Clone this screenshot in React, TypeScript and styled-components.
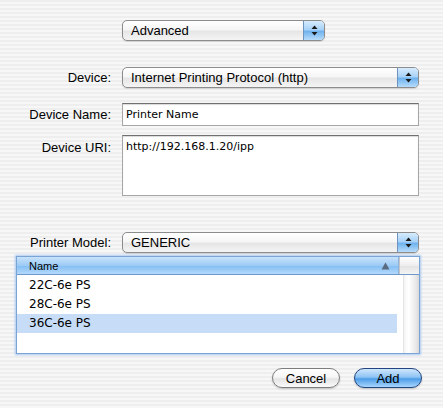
import React from "react";
import styled, { createGlobalStyle } from "styled-components";

const GlobalStyle = createGlobalStyle`
  html, body {
    margin: 0;
    padding: 0;
  }
  body {
    font-family: "Liberation Sans", Arial, sans-serif;
    color: #000;
    background: repeating-linear-gradient(
      to bottom,
      #eeeeee 0px,
      #eeeeee 2px,
      #f7f7f7 2px,
      #f7f7f7 4px
    );
  }
`;

const Sheet = styled.div`
  width: 443px;
  height: 408px;
  box-sizing: border-box;
  padding-top: 20px;
  display: flex;
  flex-direction: column;
`;

const TopRow = styled.div`
  padding-left: 122px;
  margin-bottom: 26px;
`;

const Form = styled.div`
  display: grid;
  grid-template-columns: 111px 296px;
  column-gap: 11px;
  align-items: center;
`;

const Label = styled.div<{ $top?: boolean; $gap?: number }>`
  font-size: 13px;
  text-align: right;
  align-self: ${(p) => (p.$top ? "start" : "center")};
  padding-top: ${(p) => (p.$top ? "5px" : "0")};
  margin-bottom: ${(p) => p.$gap ?? 0}px;
`;

const Cell = styled.div<{ $gap?: number }>`
  margin-bottom: ${(p) => p.$gap ?? 0}px;
`;

const PopupBox = styled.div<{ $width: number }>`
  position: relative;
  width: ${(p) => p.$width}px;
  height: 21px;
  box-sizing: border-box;
  border: 1px solid #8c8c8c;
  border-radius: 5px;
  background: linear-gradient(to bottom, #ffffff 0%, #f6f6f6 45%, #e6e6e6 55%, #f4f4f4 100%);
  box-shadow: 0 1px 1px rgba(0, 0, 0, 0.12);
  display: flex;
  align-items: center;
  overflow: hidden;
`;

const PopupText = styled.span`
  flex: 1;
  font-size: 13px;
  padding-left: 8px;
  white-space: nowrap;
`;

const PopupArrows = styled.div`
  width: 20px;
  align-self: stretch;
  border-left: 1px solid #6e93bf;
  background: linear-gradient(to bottom, #d6ebfd 0%, #a8d2f7 45%, #6fb3ee 55%, #b7dcfb 100%);
  display: flex;
  align-items: center;
  justify-content: center;
`;

const Popup = ({ text, width }: { text: string; width: number }) => (
  <PopupBox $width={width}>
    <PopupText>{text}</PopupText>
    <PopupArrows>
      <svg width="7" height="11" viewBox="0 0 7 11">
        <path d="M3.5 0.5 L6.5 4 L0.5 4 Z" fill="#1a1a1a" />
        <path d="M3.5 10.5 L6.5 7 L0.5 7 Z" fill="#1a1a1a" />
      </svg>
    </PopupArrows>
  </PopupBox>
);

const TextField = styled.div<{ $height: number; $size: number }>`
  width: 297px;
  height: ${(p) => p.$height}px;
  box-sizing: border-box;
  background: #fff;
  border: 1px solid #a6a6a6;
  border-top-color: #6f6f6f;
  box-shadow: inset 0 1px 1px rgba(0, 0, 0, 0.15);
  font-size: ${(p) => p.$size}px;
  padding: 4px 3px 0 3px;
  font-family: "DejaVu Sans", "Liberation Sans", sans-serif;
`;

const ListWrap = styled.div`
  margin: 3px 0 0 16px;
  width: 404px;
  height: 98px;
  box-sizing: border-box;
  border: 1px solid #7aa4d6;
  box-shadow: 0 0 2px 1px #a9c9ef;
  background: #fff;
  display: flex;
  flex-direction: column;
`;

const Header = styled.div`
  height: 17px;
  display: flex;
  border-bottom: 1px solid #6d98cc;
`;

const HeaderCol = styled.div`
  flex: 1;
  display: flex;
  align-items: center;
  justify-content: space-between;
  padding: 0 8px 0 12px;
  font-size: 11px;
  background: linear-gradient(to bottom, #c8e2fb 0%, #9ccbf5 50%, #82bdf3 51%, #b4dafc 100%);
  border-right: 1px solid #8fb3dc;
`;

const HeaderCorner = styled.div`
  width: 19px;
  background: linear-gradient(to bottom, #ffffff 0%, #eeeeee 50%, #e2e2e2 51%, #f4f4f4 100%);
  border-left: 1px solid #c4c4c4;
`;

const Body = styled.div`
  flex: 1;
  display: flex;
`;

const Rows = styled.div`
  width: 380px;
  padding-top: 1px;
`;

const Row = styled.div<{ $selected?: boolean }>`
  height: 19px;
  line-height: 19px;
  padding-left: 12px;
  font-size: 12px;
  font-family: "DejaVu Sans", "Liberation Sans", sans-serif;
  background: ${(p) => (p.$selected ? "#c7ddf7" : "transparent")};
`;

const Track = styled.div`
  margin-left: auto;
  width: 15px;
  background: linear-gradient(to right, #f4f4f4 0%, #ffffff 30%, #e8e8e8 80%, #d8d8d8 100%);
  border-left: 1px solid #e4e4e4;
`;

const Buttons = styled.div`
  display: flex;
  justify-content: flex-end;
  gap: 14px;
  padding-right: 21px;
  margin-top: 14px;
`;

const Button = styled.div<{ $primary?: boolean }>`
  width: 68px;
  height: 20px;
  box-sizing: border-box;
  border-radius: 10px;
  display: flex;
  align-items: center;
  justify-content: center;
  font-size: 13px;
  border: 1px solid ${(p) => (p.$primary ? "#22467f" : "#7d7d7d")};
  background: ${(p) =>
    p.$primary
      ? "linear-gradient(to bottom, #cfe6fc 0%, #8ec4f4 45%, #4d9de8 55%, #a8d6fd 100%)"
      : "linear-gradient(to bottom, #ffffff 0%, #f6f6f6 45%, #e4e4e4 55%, #fafafa 100%)"};
  box-shadow: 0 1px 2px rgba(0, 0, 0, 0.2);
`;

export default function App() {
  return (
    <>
      <GlobalStyle />
      <Sheet>
        <TopRow>
          <Popup text="Advanced" width={203} />
        </TopRow>
        <Form>
          <Label $gap={15}>Device:</Label>
          <Cell $gap={15}>
            <Popup text="Internet Printing Protocol (http)" width={297} />
          </Cell>
          <Label $gap={9}>Device Name:</Label>
          <Cell $gap={9}>
            <TextField $height={23} $size={11}>Printer Name</TextField>
          </Cell>
          <Label $top $gap={36}>Device URI:</Label>
          <Cell $gap={36}>
            <TextField $height={61} $size={11}>http://192.168.1.20/ipp</TextField>
          </Cell>
          <Label>Printer Model:</Label>
          <Cell>
            <Popup text="GENERIC" width={297} />
          </Cell>
        </Form>
        <ListWrap>
          <Header>
            <HeaderCol>
              <span>Name</span>
              <svg width="9" height="8" viewBox="0 0 9 8">
                <path d="M4.5 0.5 L8.5 7.5 L0.5 7.5 Z" fill="#5a6a80" />
              </svg>
            </HeaderCol>
            <HeaderCorner />
          </Header>
          <Body>
            <Rows>
              <Row>22C-6e PS</Row>
              <Row>28C-6e PS</Row>
              <Row $selected>36C-6e PS</Row>
            </Rows>
            <Track />
          </Body>
        </ListWrap>
        <Buttons>
          <Button>Cancel</Button>
          <Button $primary>Add</Button>
        </Buttons>
      </Sheet>
    </>
  );
}
